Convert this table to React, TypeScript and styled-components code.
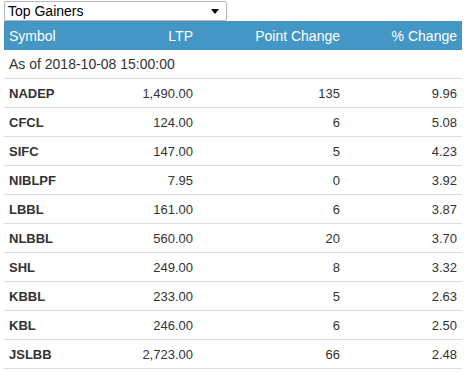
import React, { useState } from 'react';
import styled, { createGlobalStyle } from 'styled-components';

const GlobalStyle = createGlobalStyle`
  html, body {
    margin: 0;
    padding: 0;
    background: #ffffff;
    font-family: "Liberation Sans", Arial, sans-serif;
  }
`;

const Wrapper = styled.div`
  padding: 1px 3px 0 4px;
  width: 458px;
`;

const SelectBox = styled.div`
  position: relative;
  width: 223px;
  height: 20px;
  box-sizing: border-box;
  border: 1px solid #b7b7b7;
  border-radius: 2px;
  background: #fff;
  display: flex;
  align-items: center;
  padding-left: 3px;
  font-size: 14px;
  color: #000;
`;

const Arrow = styled.span`
  position: absolute;
  right: 7px;
  top: 7px;
  width: 0;
  height: 0;
  border-left: 4px solid transparent;
  border-right: 4px solid transparent;
  border-top: 5px solid #000;
`;

const Table = styled.table`
  width: 458px;
  border-collapse: collapse;
  table-layout: fixed;
`;

const HeadCell = styled.th<{ $align?: string; $w: number }>`
  box-sizing: border-box;
  width: ${(p) => p.$w}px;
  background: #4497c5;
  color: #ffffff;
  font-weight: normal;
  font-size: 14px;
  height: 29px;
  padding: 0 5px;
  text-align: ${(p) => p.$align || 'right'};
`;

const Row = styled.tr`
  border-bottom: 1px solid #dddddd;
`;

const DateCell = styled.td`
  height: 28px;
  padding: 0 5px;
  font-size: 14px;
  color: #333;
`;

const Cell = styled.td<{ $bold?: boolean }>`
  height: 28px;
  padding: 0 5px;
  font-size: 13px;
  color: #333;
  font-weight: ${(p) => (p.$bold ? 'bold' : 'normal')};
  text-align: ${(p) => (p.$bold ? 'left' : 'right')};
`;

const rows = [
  ['NADEP', '1,490.00', '135', '9.96'],
  ['CFCL', '124.00', '6', '5.08'],
  ['SIFC', '147.00', '5', '4.23'],
  ['NIBLPF', '7.95', '0', '3.92'],
  ['LBBL', '161.00', '6', '3.87'],
  ['NLBBL', '560.00', '20', '3.70'],
  ['SHL', '249.00', '8', '3.32'],
  ['KBBL', '233.00', '5', '2.63'],
  ['KBL', '246.00', '6', '2.50'],
  ['JSLBB', '2,723.00', '66', '2.48'],
];

const App: React.FC = () => {
  const [mode] = useState('Top Gainers');

  return (
    <Wrapper>
      <GlobalStyle />
      <SelectBox>
        {mode}
        <Arrow />
      </SelectBox>
      <Table>
        <thead>
          <tr>
            <HeadCell $w={80} $align="left">Symbol</HeadCell>
            <HeadCell $w={114}>LTP</HeadCell>
            <HeadCell $w={147}>Point Change</HeadCell>
            <HeadCell $w={117}>% Change</HeadCell>
          </tr>
        </thead>
        <tbody>
          <Row>
            <DateCell colSpan={4}>As of 2018-10-08 15:00:00</DateCell>
          </Row>
          {rows.map((r) => (
            <Row key={r[0]}>
              <Cell $bold>{r[0]}</Cell>
              <Cell>{r[1]}</Cell>
              <Cell>{r[2]}</Cell>
              <Cell>{r[3]}</Cell>
            </Row>
          ))}
        </tbody>
      </Table>
    </Wrapper>
  );
};

export default App;
